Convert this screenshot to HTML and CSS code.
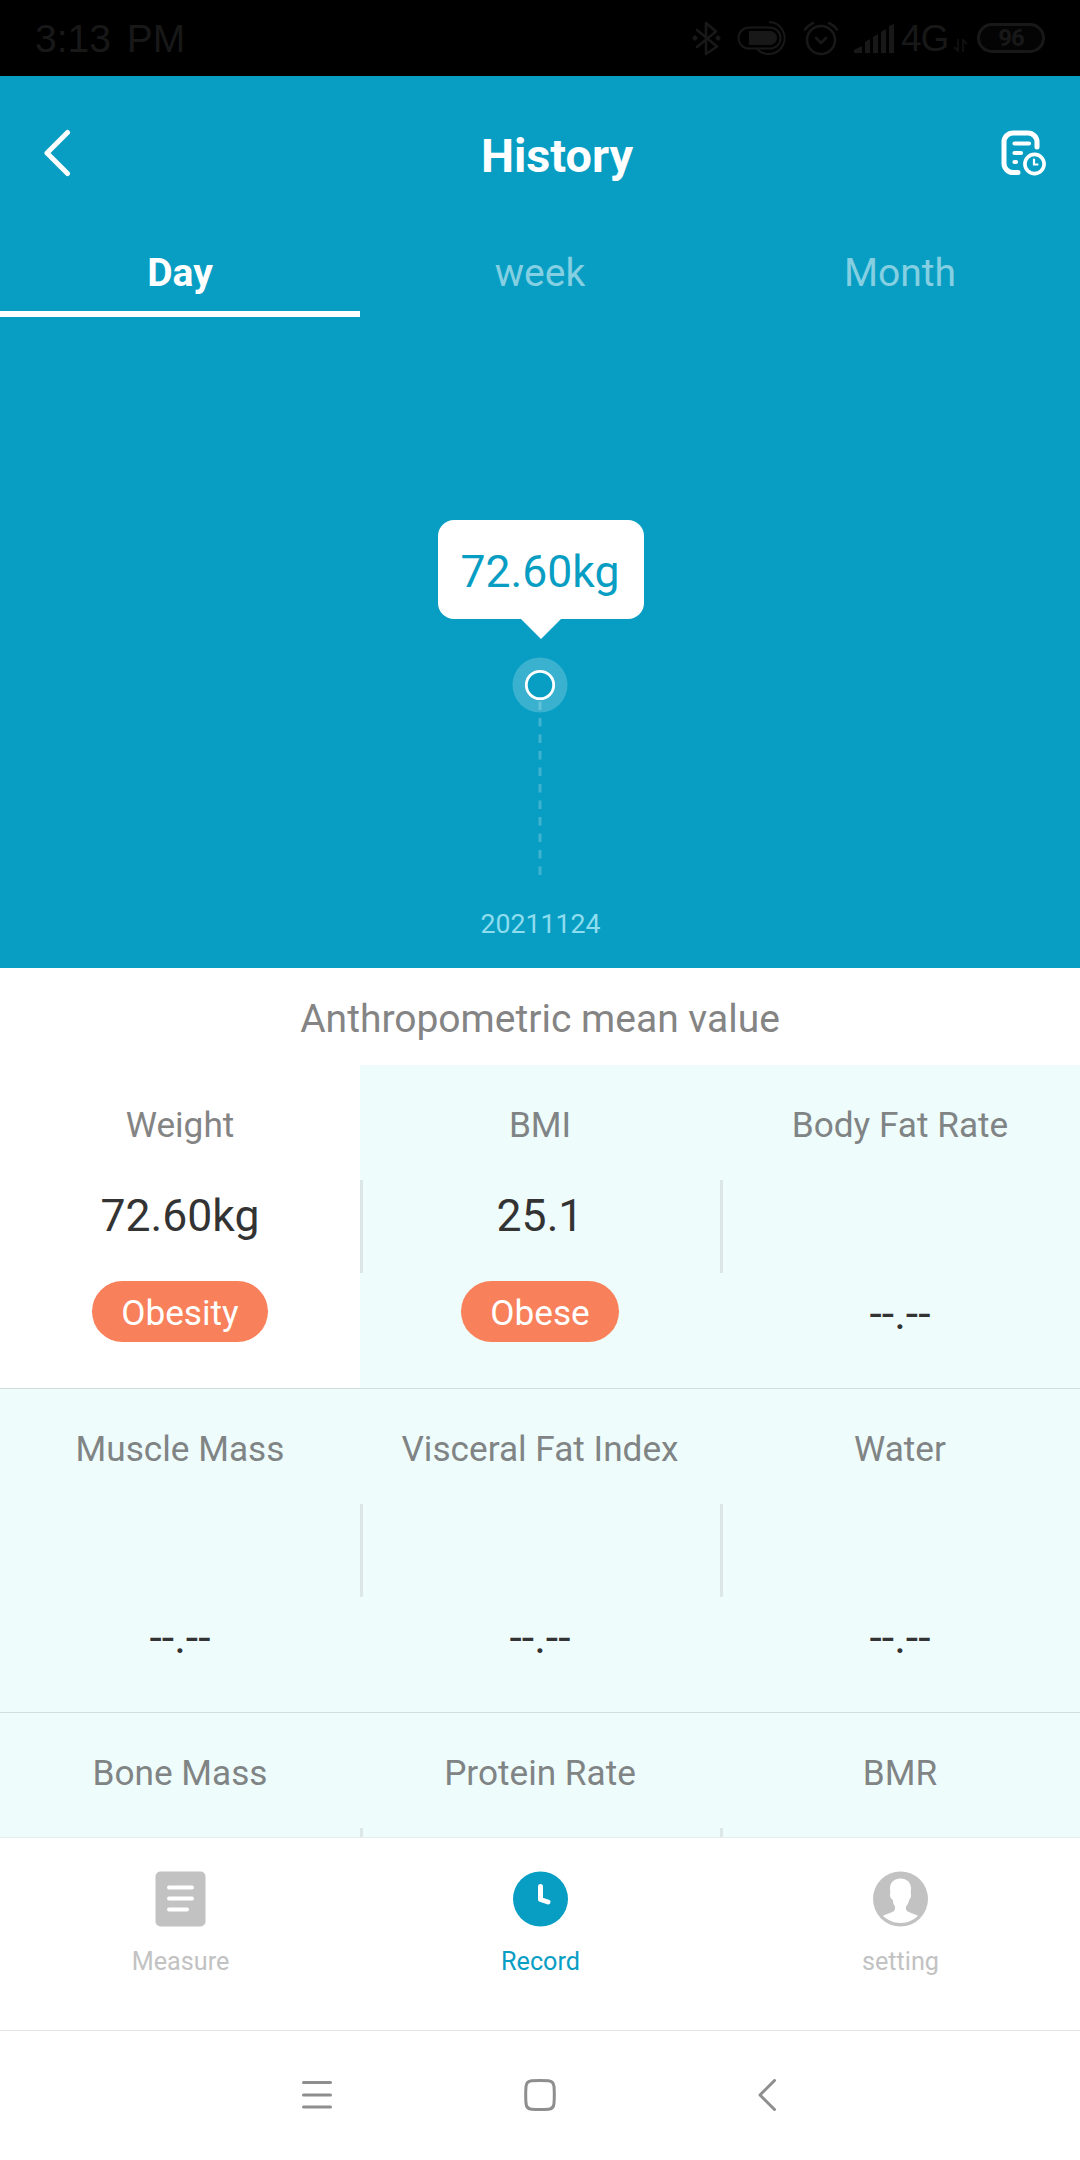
FILE: index.html
```html
<!DOCTYPE html>
<html lang="en">
<head>
    <meta charset="UTF-8">
    <meta content="width=device-width, initial-scale=1.0" name="viewport">
    <title>History</title>
    <link rel="stylesheet" href="styles.css">
</head>
<body>
    <div class="status_bar">
        <span class="time">3:13 PM</span>
        <!-- bluetooth -->
        <svg class="bt" width="30" height="36" viewBox="0 0 30 36" fill="none" stroke="#181818" stroke-width="2.6" stroke-linejoin="round" stroke-linecap="round">
            <path d="M5 10l20 16.500L14 34V3l10 8.500L5 27"/>
            <path d="M0 18l3-3 3 3-3 3zM23 18l3-3 3 3-3 3z" fill="#181818" stroke="none"/>
        </svg>
        <svg class="saver" width="50" height="36" viewBox="0 0 50 36" fill="none" stroke="#181818" stroke-width="2">
            <rect x="1.500" y="7.500" width="42" height="21" rx="10.500"/>
            <path d="M12 11h21a7 7 0 0 1 0 14H12z" fill="#181818" stroke="none"/>
            <path d="M32 2a16 16 0 1 1-12 27"/>
        </svg>
        <!-- alarm -->
        <svg class="alarm" width="36" height="36" viewBox="0 0 36 36" fill="none" stroke="#181818" stroke-width="2.600" stroke-linecap="round">
            <circle cx="18" cy="20" r="14"/>
            <path d="M13 18l5 5 5-5M2 9.500q3-4 8-6.500M26 3q5 2.500 8 6.500"/>
        </svg>
        <svg class="signal" width="40" height="29" viewBox="0 0 40 29" fill="#181818">
            <path d="M0 29v-3l8-4v7zM11 29V18l5-3v14zM19 29V13l5-3v19zM27 29V8l5-3v24zM35 29V2l5-2v29z"/>
        </svg>
        <span class="net">4G</span>
        <svg class="updown" width="14" height="13" viewBox="0 0 14 13" fill="none" stroke="#111" stroke-width="1.800">
            <path d="M4 0v12L0 8M9 13V1l4 4"/>
        </svg>
        <span class="battery">96</span>
    </div>

    <div class="top">
        <div class="header">
            <svg width="28" height="48" viewBox="0 0 28 48" fill="none" stroke="#fff" stroke-width="5" stroke-linecap="round" stroke-linejoin="round">
                <path d="M23.500 3.500L3 24l20.500 20.500"/>
            </svg>
            <h1>History</h1>
            <svg width="46" height="46" viewBox="0 0 46 46" fill="none" stroke="#fff" stroke-width="5" stroke-linecap="round">
                <path d="M17 42.500h-5a9 9 0 0 1-9-9V12a9 9 0 0 1 9-9h15a9 9 0 0 1 9 9v5"/>
                <path d="M13.500 13.500h14.500M13.500 23h6.500M13.500 32h1.500" stroke-width="4.200"/>
                <circle cx="33.500" cy="34" r="9.600" stroke-width="3.600"/>
                <path d="M33 29.500V34.500h3.500" stroke-width="2.200"/>
            </svg>
        </div>

        <div class="tabs">
            <a class="on">Day</a>
            <a>week</a>
            <a>Month</a>
        </div>

        <div class="chart">
            <div class="bubble">72.60kg</div>
            <svg width="56" height="219" viewBox="0 0 56 219" fill="none">
                <circle cx="28" cy="28" r="27.500" fill="#fff" fill-opacity=".2"/>
                <circle class="dot" cx="28" cy="28" r="13.700"/>
                <path d="M28 44.500V218.500" stroke="#fff" stroke-opacity=".22" stroke-width="3" stroke-dasharray="8.500 8"/>
            </svg>
            <span class="date">20211124</span>
        </div>
    </div>

    <h2>Anthropometric mean value</h2>

    <div class="list">
        <div class="cell on">
            <p class="name">Weight</p>
            <p class="num">72.60kg</p>
            <span class="tag">Obesity</span>
        </div>
        <div class="cell">
            <p class="name">BMI</p>
            <p class="num">25.1</p>
            <span class="tag">Obese</span>
        </div>
        <div class="cell">
            <p class="name">Body Fat Rate</p>
            <p class="num"></p>
            <span class="none">--.--</span>
        </div>
        <div class="cell">
            <p class="name">Muscle Mass</p>
            <p class="num"></p>
            <span class="none">--.--</span>
        </div>
        <div class="cell">
            <p class="name">Visceral Fat Index</p>
            <p class="num"></p>
            <span class="none">--.--</span>
        </div>
        <div class="cell">
            <p class="name">Water</p>
            <p class="num"></p>
            <span class="none">--.--</span>
        </div>
        <div class="cell"><p class="name">Bone Mass</p></div>
        <div class="cell"><p class="name">Protein Rate</p></div>
        <div class="cell"><p class="name">BMR</p></div>
    </div>

    <div class="tabbar">
        <a>
            <svg width="56" height="56" viewBox="0 0 56 56">
                <rect x="3.500" y="0.500" width="50" height="55" rx="5" fill="#c2c2c2"/>
                <path d="M17 16.500h23M17 27.500h23M17 38.500h18" stroke="#fff" stroke-width="4" stroke-linecap="round"/>
            </svg>
            <span>Measure</span>
        </a>
        <a class="on">
            <svg width="56" height="56" viewBox="0 0 56 56">
                <circle cx="28.500" cy="28" r="27.500" fill="#089ec3"/>
                <path d="M28.500 15.500v13l7.500 2.500" fill="none" stroke="#fff" stroke-width="5" stroke-linecap="round" stroke-linejoin="round"/>
            </svg>
            <span>Record</span>
        </a>
        <a>
            <svg width="56" height="56" viewBox="0 0 56 56">
                <circle cx="28.500" cy="28" r="27.500" fill="#c2c2c2"/>
                <path d="M28.500 7.500c6.500 0 10.500 4.200 10.500 10 0 2-.3 3.500-.3 5.300.8.700.4 5-1.700 6.200-.3 2.500-1.300 4.500-3 6.500-.3 2 .1 4 1.700 5 3.500 2 7.500 2.500 10.300 4.300-4.500 4.700-10.500 7.200-17.500 7.200s-13-2.500-17.500-7.200c2.800-1.800 6.800-2.300 10.300-4.300 1.600-1 2-3 1.700-5-1.500-2-2-4-2.200-6.500-2.500-1.200-3.300-5.500-2.500-6.200 0-1.800-.3-3.300-.3-5.300 0-5.800 4-10 10.500-10z" fill="#fff"/>
            </svg>
            <span>setting</span>
        </a>
    </div>

    <div class="sys_nav">
        <svg width="30" height="32" viewBox="0 0 30 32" stroke="#8e8e8e" stroke-width="3" stroke-linecap="round">
            <path d="M1.500 3.500h27M1.500 16h27M1.500 28h27"/>
        </svg>
        <svg width="32" height="32" viewBox="0 0 32 32" fill="none" stroke="#8e8e8e" stroke-width="3">
            <path d="M7.500 1.800Q16 1.200 24.500 1.800 29.500 2.200 30 7.500 30.600 16 30 24.500 29.500 29.800 24.500 30.200 16 30.800 7.500 30.200 2.500 29.800 2 24.500 1.400 16 2 7.500 2.500 2.200 7.500 1.800z"/>
        </svg>
        <svg width="30" height="33" viewBox="0 0 30 33" fill="none" stroke="#8e8e8e" stroke-width="3" stroke-linecap="round" stroke-linejoin="round">
            <path d="M16.500 1.500L2 16l14.500 14.500"/>
        </svg>
    </div>
</body>
</html>
```
FILE: styles.css
```css
*{margin: 0;padding: 0;box-sizing: border-box;}
body{display: flex;flex-direction: column;width: 1080px;height: 2160px;overflow: hidden;background: #fff;font-family: Roboto, "Liberation Sans", sans-serif;}
svg{display: block;flex: none;}

/* 状态栏 */
.status_bar{display: flex;align-items: center;flex: none;height: 76px;padding: 0 35px;background: #000;color: #181818;}
.time{flex: 1;font: 39px/76px "Liberation Sans", sans-serif;padding-top: 2px;word-spacing: 5px;}
.saver{margin-left: 15px;}
.alarm{margin-left: 16px;}
.signal{margin-left: 15px;}
.net{width: 50px;margin-left: 7px;font: 37px/76px "Liberation Sans", sans-serif;padding-top: 2px;letter-spacing: -1px;}
.updown{margin: 14px 0 0 3px;}
.battery{width: 68px;height: 30px;margin-left: 9px;border: 3px solid #181818;border-radius: 15px;text-align: center;font: bold 24px/25px Roboto, sans-serif;letter-spacing: -1px;background: #040404;}

.top{flex: none;height: 892px;background: #089ec3;color: #fff;}
.header{display: flex;align-items: center;justify-content: space-between;height: 160px;padding: 0 33px 0 44px;}
.header svg{margin-bottom: 6px;}
.header h1{font-size: 46.8px;line-height: 54px;margin-left: 41px;}

.tabs{display: flex;height: 81px;}
.tabs a{flex: 1;border-bottom: 6px solid transparent;text-align: center;font-size: 39px;line-height: 75px;color: #84cfe1;}
.tabs .on{border-color: #fff;color: #fff;font-weight: bold;}

.chart{display: flex;flex-direction: column;align-items: center;padding-top: 203px;}
.bubble{position: relative;width: 206px;height: 99px;margin-left: 2px;padding-right: 2px;border-radius: 16px;background: #fff;text-align: center;font-size: 44.5px;line-height: 104px;color: #089ec3;}
.bubble:after{content: "";position: absolute;left: 83px;top: 99px;border: 20px solid transparent;border-top-color: #fff;border-bottom: 0;}
.chart svg{margin-top: 38px;}
.dot{fill: #089ec3;stroke: #fff;stroke-width: 2.8px;}
.date{margin: 32px 0 0 1px;font-size: 26.7px;line-height: 32px;color: #8eddee;}

h2{flex: none;height: 97px;padding-top: 3px;text-align: center;font-size: 39px;font-weight: normal;line-height: 97px;color: #848484;}

/* 数据列表 */
.list{display: grid;grid-template-columns: repeat(3, 1fr);grid-auto-rows: 324px;flex: 1;min-height: 0;overflow: hidden;background: #effcfc;}
.cell{position: relative;display: flex;flex-direction: column;align-items: center;padding-top: 39px;border-bottom: 1px solid #d2dddd;}
.cell.on{background: #fff;}
.cell:not(:nth-child(3n+1)):before{content: "";position: absolute;left: 0;top: 115px;width: 3px;height: 93px;background: #dce6e6;}
.name{font-size: 35.2px;line-height: 43px;color: #808484;}
.on .name{color: #848484;}
.num{height: 53px;margin-top: 42px;font-size: 44.5px;line-height: 55px;color: #333;}
.tag{height: 61px;margin-top: 39px;padding: 0 29px;border-radius: 31px;background: #f8805a;font-size: 35.2px;line-height: 65px;color: #fff;}
.none{margin-top: 39px;font-size: 44.5px;line-height: 67px;color: #333;}

.tabbar{display: flex;flex: none;height: 193px;border-top: 1px solid #e2eeee;}
.tabbar a{display: flex;flex: 1;flex-direction: column;align-items: center;padding-top: 33px;font-size: 25.2px;color: #c2c2c2;}
.tabbar span{margin: 19px 0 0 1px;line-height: 31px;}
.tabbar .on{color: #089ec3;}

.sys_nav{display: flex;align-items: center;justify-content: space-between;flex: none;height: 130px;padding: 0 292px 1px 302px;border-top: 1px solid #e2e2e2;}
.sys_nav svg:nth-child(2){margin-left: -11px;}
```
